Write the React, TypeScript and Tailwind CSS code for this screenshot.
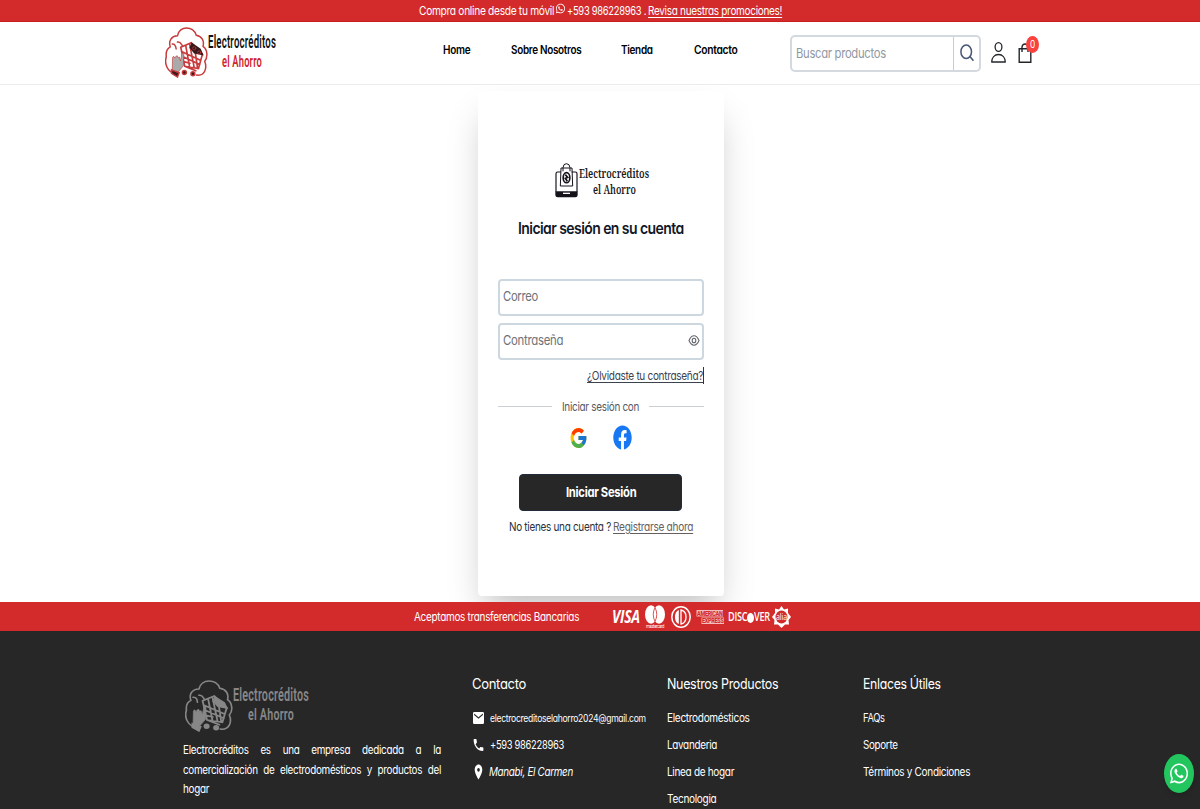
import { useLayoutEffect, useRef, type ReactNode } from "react";
import { FaWhatsapp, FaFacebook } from "react-icons/fa";
import { FcGoogle } from "react-icons/fc";
import { MdEmail, MdPhone, MdLocationOn } from "react-icons/md";

/* One line of text, condensed horizontally to fill the width of its box. */
function Fit({ className = "", underline = false, children }: { className?: string; underline?: boolean; children: ReactNode }) {
  const box = useRef<HTMLSpanElement>(null);
  const text = useRef<HTMLSpanElement>(null);
  useLayoutEffect(() => {
    if (!box.current || !text.current) return;
    const ratio = box.current.clientWidth / text.current.offsetWidth;
    text.current.style.transform = `scaleX(${ratio})`;
  }, []);
  return (
    <span ref={box} className={`block shrink-0 whitespace-nowrap ${className}`}>
      <span ref={text} className={`inline-block origin-left ${underline ? "underline underline-offset-2" : ""}`}>
        {children}
      </span>
    </span>
  );
}

function CartLogo({ className, line, hand, dark }: { className: string; line: string; hand: string; dark: string }) {
  return (
    <svg className={className} viewBox="44 79 131 156" preserveAspectRatio="none" fill="none" stroke={line} strokeWidth="4.5" strokeLinecap="round">
      <path d="M72 222C52 214 41 192 48 170C46 155 51 145 60 140C54 120 64 107 82 106C88 74 130 74 139 104C157 107 164 121 160 138C174 148 175 172 165 184C173 205 165 230 140 226" />
      <path d="M66 131C76 130 77 138 78 146M82 125C92 122 94 134 98 138" />
      <path d="M92 141L124 127L158 162L146 206L104 199ZM96 155L152 181M99 170L150 194M101 185L120 190M107 135L119 201M119 131L133 203M134 139L143 205M104 199L138 213" strokeWidth="5" />
      <path d="M126 130L151 147L158 163L134 158L121 142Z" fill={dark} stroke={dark} />
      <circle cx="133" cy="144" r="5" strokeWidth="2" />
      <circle cx="148" cy="157" r="5" strokeWidth="2" />
      <path d="M66 213L67 172Q70 164 74 174L77 169Q82 163 84 173L88 171L91 183L96 160Q103 153 101 169L100 197Q91 209 84 217Z" fill={hand} strokeWidth="2" />
      <path d="M64 210L87 219L82 232L64 221Z" fill={dark} />
      <circle cx="103" cy="218" r="6" fill={dark} />
      <circle cx="129" cy="222" r="6" fill={dark} />
    </svg>
  );
}

function BagLogo() {
  return (
    <svg className="h-[35px] w-[23px]" viewBox="0 0 69 105" preserveAspectRatio="none" fill="none" stroke="#15121a" strokeWidth="3">
      <path d="M3 86V32Q3 27 8 27H18M50 27H61Q66 27 66 32V86" strokeWidth="3.5" />
      <path d="M18 15H51L53 69H16Z" />
      <path d="M24 25V14Q25 2 34 2Q44 2 45 14V25" />
      <ellipse cx="34.500" cy="44" rx="10" ry="15" strokeWidth="5" />
      <path d="M31 35L38 43L31 46L37 55" strokeWidth="5" />
      <path d="M1 85H68V96Q68 103 61 103H8Q1 103 1 96Z" fill="#15121a" stroke="none" />
      <path d="M24 91H45" stroke="#fff" strokeWidth="4" />
    </svg>
  );
}

function Cards() {
  return (
    <div className="flex h-[29px] items-center">
      <Fit className="w-7 font-[Open_Sans] text-[17px] leading-[29px] font-bold italic">VISA</Fit>
      <svg className="ml-[5px] h-6 w-5 overflow-visible" viewBox="0 0 20 24" fill="#fff">
        <ellipse cx="6" cy="9.500" rx="6" ry="9.200" />
        <ellipse cx="14" cy="9.500" rx="6" ry="9.200" />
        <path d="M10 2.500Q6.500 9.500 10 16.500Q13.500 9.500 10 2.500Z" fill="none" stroke="#d32b2b" strokeWidth=".8" />
        <text x="1" y="22.500" fontSize="4.500" textLength="18" lengthAdjust="spacingAndGlyphs" fontFamily="Roboto, sans-serif">mastercard</text>
      </svg>
      <svg className="ml-1.5 h-[22px] w-5" viewBox="0 0 20 22" preserveAspectRatio="none">
        <ellipse cx="10" cy="11" rx="9.200" ry="10.200" fill="none" stroke="#fff" strokeWidth="1.500" />
        <path d="M7.800 4Q4 5.500 4 11T7.800 18Z" fill="#fff" />
        <path d="M10 4Q15 5 15 11T10 18Z" fill="none" stroke="#fff" strokeWidth="1.300" />
      </svg>
      <svg className="ml-[5px] h-4 w-7 overflow-visible" viewBox="0 0 28 16" fill="#d32b2b" fontFamily="Roboto, sans-serif" fontWeight="800" fontSize="7">
        <path d="M.5 1H27V7.500H.5ZM5.500 8.500H28V15H5.500Z" fill="#f4bcbc" />
        <text x="1" y="6.700" textLength="25.500" lengthAdjust="spacingAndGlyphs">AMERICAN</text>
        <text x="6" y="14.200" textLength="21.500" lengthAdjust="spacingAndGlyphs">EXPRESS</text>
      </svg>
      <div className="ml-1 flex items-center">
        <Fit className="w-[19px] font-[Open_Sans] text-[12px] leading-[31px] font-semibold">DISC</Fit>
        <span className="mt-0.5 h-2.5 w-[7px] rounded-[50%] bg-white" />
        <Fit className="w-4 font-[Open_Sans] text-[12px] leading-[31px] font-semibold">VER</Fit>
      </div>
      <svg className="ml-0.5 h-[22px] w-[19px]" viewBox="0 0 38 44" preserveAspectRatio="none" fill="#fff">
        <path d="M19 0L24 7L32 5L32 14L38 22L33 28L34 37L26 37L19 44L12 37L4 37L5 28L0 22L6 14L6 5L14 7Z" />
        <ellipse cx="19" cy="22" rx="12" ry="13" fill="#d32b2b" />
        <text x="8" y="28" fontSize="18" fontWeight="500" textLength="22" lengthAdjust="spacingAndGlyphs" fontFamily="Open Sans, sans-serif">alia</text>
      </svg>
    </div>
  );
}

function Field({ label, width, icon }: { label: string; width: string; icon?: ReactNode }) {
  return (
    <div className="flex h-[37px] w-[206px] justify-between rounded-[4px] border-2 border-[#cdd7e0] pr-0.5 pl-[3px]">
      <Fit className={`h-[31px] text-[13.5px] leading-[31px] text-[#6d7178] ${width}`}>{label}</Fit>
      {icon}
    </div>
  );
}

export default function App() {
  return (
    <div className="relative flex h-[809px] w-[1200px] flex-col overflow-hidden bg-white font-[Inter,sans-serif] text-[12px] tracking-[-0.03em] text-[#111827] [font-feature-settings:'cv11']">
      <div className="flex h-[22px] shrink-0 items-start border-b border-[#c91f1f] bg-[#d32b2b] pl-[419px] leading-[21px] text-white">
        <Fit className="w-[135px]">Compra online desde tu móvil</Fit>
        <FaWhatsapp preserveAspectRatio="none" className="mt-[3px] ml-0.5 h-[11px] w-[9px] shrink-0" />
        <Fit className="ml-[2px] w-[79px]">+593 986228963 .</Fit>
        <Fit underline className="ml-[2px] w-[134px]">Revisa nuestras promociones!</Fit>
      </div>

      <header className="z-10 flex h-[63px] shrink-0 border-b border-[#ececec] bg-white">
        <div className="flex w-[443px] pl-[165px]">
          <CartLogo className="mt-[5px] h-[51px] w-[43px] shrink-0" line="#c83a3c" hand="#aaa" dark="#37191a" />
          <div className="pt-[9px] font-[Roboto,sans-serif] font-semibold tracking-[0.03em]">
            <Fit className="h-5 w-[68px] text-[18px] leading-[21px] text-[#111]">Electrocréditos</Fit>
            <Fit className="ml-3.5 h-5 w-10 text-[17px] leading-5 text-[#d2232a]">el Ahorro</Fit>
          </div>
        </div>
        <nav className="flex w-[347px] text-[11.500px] leading-[56px] font-semibold text-black">
          <Fit className="w-[27px]">Home</Fit>
          <Fit className="ml-[41px] w-[70px]">Sobre Nosotros</Fit>
          <Fit className="ml-[40px] w-[32px]">Tienda</Fit>
          <Fit className="ml-[41px] w-[43px]">Contacto</Fit>
        </nav>
        <div className="mt-[13px] flex h-[37px] w-[191px] rounded-[5px] border-2 border-[#d3d9df]">
          <div className="w-[162px] border-r border-[#c6ccd3] pl-1">
            <Fit className="w-[90px] text-[13.500px] leading-[33px] text-[#8f97a3]">Buscar productos</Fit>
          </div>
          <svg className="mt-[7px] ml-[6px] h-[18px] w-[14px]" viewBox="0 0 14 18" fill="none" stroke="#465775" strokeWidth="1.500">
            <ellipse cx="6.200" cy="7.800" rx="5.300" ry="6.700" />
            <path d="M10 12.500L13.400 16.800" />
          </svg>
        </div>
        <svg className="mt-5 ml-2.5 h-[21px] w-[15px]" viewBox="0 0 15 21" fill="none" stroke="#22262b" strokeWidth="1.300">
          <ellipse cx="7.500" cy="5" rx="3.400" ry="4.300" />
          <path d="M.7 20C.8 15.500 3.500 12.500 7.500 12.500S14.200 15.500 14.300 20Z" strokeLinejoin="round" />
        </svg>
        <div className="relative mt-[21px] ml-[12px] h-5 w-[14px]">
          <svg className="h-5 w-[14px]" viewBox="0 0 14 20" fill="none" stroke="#22262b" strokeWidth="1.400">
            <path d="M1.200 5.700H12.800V19.200H1.200ZM4 9V4Q4.500 1 7 1T10 4V9" />
          </svg>
          <span className="absolute -top-[7px] left-[8px] flex h-[17px] w-[13px] justify-center rounded-[50%] bg-[#f9413e] text-[10px] leading-[17px] text-white">
            <Fit className="w-[5px]">0</Fit>
          </span>
        </div>
      </header>

      <main className="flex h-[517px] shrink-0 justify-start pt-1.5 pl-[478px]">
        <section className="flex h-[505px] w-[246px] flex-col rounded-[4px] bg-white pl-5 shadow-[0_20px_34px_-8px_rgba(0,0,0,0.25)]">
          <div className="mt-[72px] ml-[57px] flex h-[35px]">
            <BagLogo />
            <div className="ml-px pt-0.5 font-[Noto_Serif,serif] text-[13px] leading-4 font-semibold tracking-normal text-[#181818]">
              <Fit className="h-4 w-[70px]">Electrocréditos</Fit>
              <Fit className="ml-3.5 h-4 w-[43px]">el Ahorro</Fit>
            </div>
          </div>
          <Fit className="mt-5 ml-5 h-5 w-[166px] text-[16px] leading-5 font-semibold tracking-[-0.04em]">Iniciar sesión en su cuenta</Fit>
          <div className="mt-[41px] flex h-[81px] flex-col justify-between">
            <Field label="Correo" width="w-[35px]" />
            <Field
              label="Contraseña"
              width="w-[60px]"
              icon={
                <svg className="mt-[9px] h-[13px] w-[12px]" viewBox="0 0 12 13" fill="none" stroke="#62666c" strokeWidth="1.100">
                  <path d="M1 6.500C2.500 3 4 1.800 6 1.800S9.500 3 11 6.500C9.500 10 8 11.200 6 11.200S2.500 10 1 6.500Z" />
                  <ellipse cx="6" cy="6.500" rx="1.800" ry="2.300" />
                </svg>
              }
            />
          </div>
          <div className="mt-[7px] ml-[89px] h-[17px] w-[117px] border-r border-[#333]">
            <Fit underline className="w-[116px] leading-[17px] text-[#3c434d]">¿Olvidaste tu contraseña?</Fit>
          </div>
          <div className="mt-[14px] flex h-4 w-[206px] items-center">
            <span className="h-px w-[54px] bg-[#cbcfd2]" />
            <Fit className="ml-2.5 w-[77px] leading-[17px] text-[#545a62]">Iniciar sesión con</Fit>
            <span className="ml-2.5 h-px w-[55px] bg-[#cbcfd2]" />
          </div>
          <div className="mt-[11px] flex h-[25px] items-center pl-[70px]">
            <div className="flex w-5 justify-center">
              <FcGoogle preserveAspectRatio="none" className="h-6 w-[19px]" />
            </div>
            <FaFacebook preserveAspectRatio="none" className="ml-[25px] h-[25px] w-[19px] text-[#1877f2]" />
          </div>
          <button className="mt-6 ml-[21px] flex h-[37px] w-[163px] shrink-0 justify-center rounded-[4px] border border-[#202c3c] bg-[#272727] text-left text-white">
            <Fit className="w-[70px] text-[13.500px] leading-[35px] font-bold">Iniciar Sesión</Fit>
          </button>
          <div className="mt-[7px] ml-[11px] flex h-[18px] leading-[18px]">
            <Fit className="w-[102px] text-[#29313c]">No tienes una cuenta ?</Fit>
            <Fit underline className="ml-[2px] w-[80px] text-[#65605e]">Registrarse ahora</Fit>
          </div>
        </section>
      </main>

      <div className="z-10 flex h-[29px] shrink-0 bg-[#d32b2b] pl-[414px] text-white">
        <Fit className="mr-[33px] w-[165px] text-[11.500px] leading-[31px]">Aceptamos transferencias Bancarias</Fit>
        <Cards />
      </div>

      <footer className="flex h-[178px] shrink-0 bg-[#272727] pl-[183px] text-[11.500px] leading-[27px] text-white">
        <div className="w-[289px]">
          <div className="mt-[49px] flex h-[52px] pl-0.5">
            <CartLogo className="h-[52px] w-12 shrink-0" line="#878787" hand="#878787" dark="#878787" />
            <div className="pt-1 font-[Roboto,sans-serif] font-semibold tracking-[0.03em] text-[#898787]">
              <Fit className="h-5 w-[76px] text-[18px] leading-[21px]">Electrocréditos</Fit>
              <Fit className="ml-[15px] h-5 w-[46px] text-[17px] leading-5">el Ahorro</Fit>
            </div>
          </div>
          <p className="mt-[9px] w-[300px] origin-left scale-x-[.86] text-justify leading-[19.500px]">
            Electrocréditos es una empresa dedicada a la comercialización de electrodomésticos y productos del hogar
          </p>
        </div>
        <div className="w-[195px] pt-[39px]">
          <Fit className="mb-2 w-[54px] text-[14.500px]">Contacto</Fit>
          <div className="flex h-[27px] items-start">
            <MdEmail preserveAspectRatio="none" viewBox="2 4 20 16" className="mt-[7px] ml-px h-3 w-[11px] shrink-0" />
            <Fit className="ml-[6px] w-[156px] text-[10.500px]">electrocreditoselahorro2024@gmail.com</Fit>
          </div>
          <div className="flex h-[27px] items-start">
            <MdPhone preserveAspectRatio="none" className="mt-[5px] h-4 w-[13px] shrink-0" />
            <Fit className="ml-[5px] w-[74px]">+593 986228963</Fit>
          </div>
          <div className="flex h-[27px] items-start">
            <MdLocationOn preserveAspectRatio="none" className="mt-1 h-[18px] w-[13px] shrink-0" />
            <Fit className="ml-[4px] w-[84px] italic">Manabí, El Carmen</Fit>
          </div>
        </div>
        <div className="w-[196px] pt-[39px]">
          <Fit className="mb-2 w-[111px] text-[14.500px]">Nuestros Productos</Fit>
          <Fit className="w-[83px]">Electrodomésticos</Fit>
          <Fit className="w-[50px]">Lavanderia</Fit>
          <Fit className="w-[67px]">Linea de hogar</Fit>
          <Fit className="w-[49px]">Tecnologia</Fit>
        </div>
        <div className="pt-[39px]">
          <Fit className="mb-2 w-[78px] text-[14.500px]">Enlaces Útiles</Fit>
          <Fit className="w-[22px]">FAQs</Fit>
          <Fit className="w-[35px]">Soporte</Fit>
          <Fit className="w-[107px]">Términos y Condiciones</Fit>
        </div>
      </footer>

      <div className="absolute top-[754px] left-[1164px] z-20 flex h-[39px] w-[30px] items-center justify-center rounded-[50%] bg-[#22c55e] text-white shadow-md">
        <FaWhatsapp preserveAspectRatio="none" className="h-[23px] w-[18px]" />
      </div>
    </div>
  );
}
